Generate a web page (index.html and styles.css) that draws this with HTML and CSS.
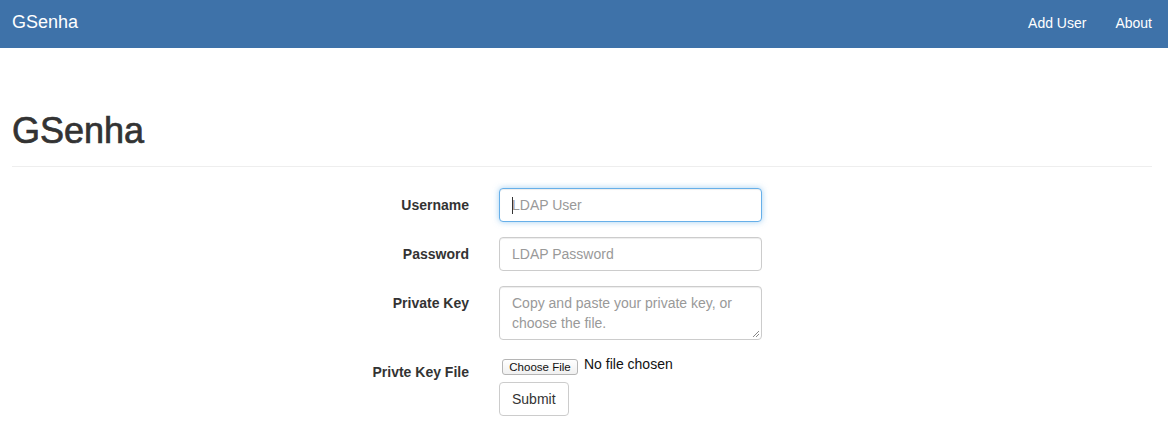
FILE: index.html
```html
<!DOCTYPE html>
<html>
<head>
<meta charset="utf-8">
<title>GSenha</title>
<link rel="stylesheet" href="styles.css">
</head>
<body>
<nav class="navbar">
  <a class="brand" href="#">GSenha</a>
  <div class="nav-links">
    <a href="#">Add User</a>
    <a href="#">About</a>
  </div>
</nav>
<main class="page">
  <header class="page-header">
    <h1>GSenha</h1>
  </header>
  <form class="form">
    <div class="row">
      <label class="label">Username</label>
      <div class="control">
        <div class="input focused"><span class="caret"></span><span class="ph">LDAP User</span></div>
      </div>
    </div>
    <div class="row">
      <label class="label">Password</label>
      <div class="control">
        <div class="input"><span class="ph">LDAP Password</span></div>
      </div>
    </div>
    <div class="row">
      <label class="label">Private Key</label>
      <div class="control">
        <div class="input textarea"><span class="ph">Copy and paste your private key, or choose the file.</span>
          <svg class="grip" width="8" height="8" viewBox="0 0 8 8"><path d="M7 1 L1 7 M7 4 L4 7" stroke="#888" stroke-width="1" fill="none"/></svg>
        </div>
      </div>
    </div>
    <div class="row last">
      <label class="label">Privte Key File</label>
      <div class="control">
        <div class="file"><span class="file-btn">Choose File</span><span class="file-text">No file chosen</span></div>
        <button type="button" class="btn">Submit</button>
      </div>
    </div>
  </form>
</main>
</body>
</html>
```
FILE: styles.css
```css
* { box-sizing: border-box; }
html, body { margin: 0; padding: 0; }
body {
  font-family: "Liberation Sans", Arial, sans-serif;
  font-size: 14px;
  line-height: 20px;
  color: #333;
  background: #fff;
}
.navbar {
  height: 48px;
  background: #3e72a9;
  display: flex;
  justify-content: space-between;
  align-items: flex-start;
  padding: 0 16px 0 12px;
}
.brand {
  color: #fff;
  text-decoration: none;
  font-size: 18px;
  line-height: 20px;
  padding-top: 12px;
}
.nav-links { display: flex; gap: 29px; padding-top: 13px; }
.nav-links a { color: #fff; text-decoration: none; font-size: 14px; line-height: 20px; }
.page { padding: 0 16px 0 12px; }
.page-header {
  padding-top: 63px;
  padding-bottom: 15px;
  border-bottom: 1px solid #eee;
}
.page-header h1 {
  margin: 0;
  font-size: 36px;
  line-height: 40px;
  font-weight: 500;
  color: #333;
  -webkit-text-stroke: 0.7px #333;
}
.form { padding-top: 21px; display: flex; flex-direction: column; gap: 15px; }
.row { display: flex; gap: 30px; }
.label {
  width: 457px;
  text-align: right;
  font-weight: bold;
  padding-top: 7px;
  line-height: 20px;
}
.control { width: 263px; }
.input {
  position: relative;
  height: 34px;
  border: 1px solid #ccc;
  border-radius: 4px;
  padding: 6px 12px;
  line-height: 20px;
  box-shadow: inset 0 1px 1px rgba(0,0,0,.075);
  background: #fff;
}
.input.focused {
  border-color: #66afe9;
  box-shadow: inset 0 1px 1px rgba(0,0,0,.075), 0 0 6px rgba(102,175,233,.6);
}
.ph { color: #999; }
.caret {
  position: absolute;
  left: 12px;
  top: 8px;
  width: 1px;
  height: 17px;
  background: #333;
}
.textarea { height: 54px; }
.grip { position: absolute; right: 1px; bottom: 1px; }
.file { height: 27px; padding-top: 4px; display: flex; align-items: flex-start; }
.file-btn {
  margin-left: 3px;
  height: 16px;
  width: 76px;
  border: 1px solid #b5b5b5;
  border-radius: 3px;
  background: linear-gradient(#fff, #f0f0f0);
  font-size: 11.5px;
  line-height: 14px;
  color: #111;
  text-align: center;
}
.file-text { margin-left: 6px; color: #111; line-height: 12px; font-size: 14px; margin-top: -1px; }
.btn {
  display: block;
  font-family: "Liberation Sans", Arial, sans-serif;
  font-size: 14px;
  line-height: 20px;
  padding: 6px 12px;
  height: 34px;
  border: 1px solid #ccc;
  border-radius: 4px;
  background: #fff;
  color: #333;
}
```
